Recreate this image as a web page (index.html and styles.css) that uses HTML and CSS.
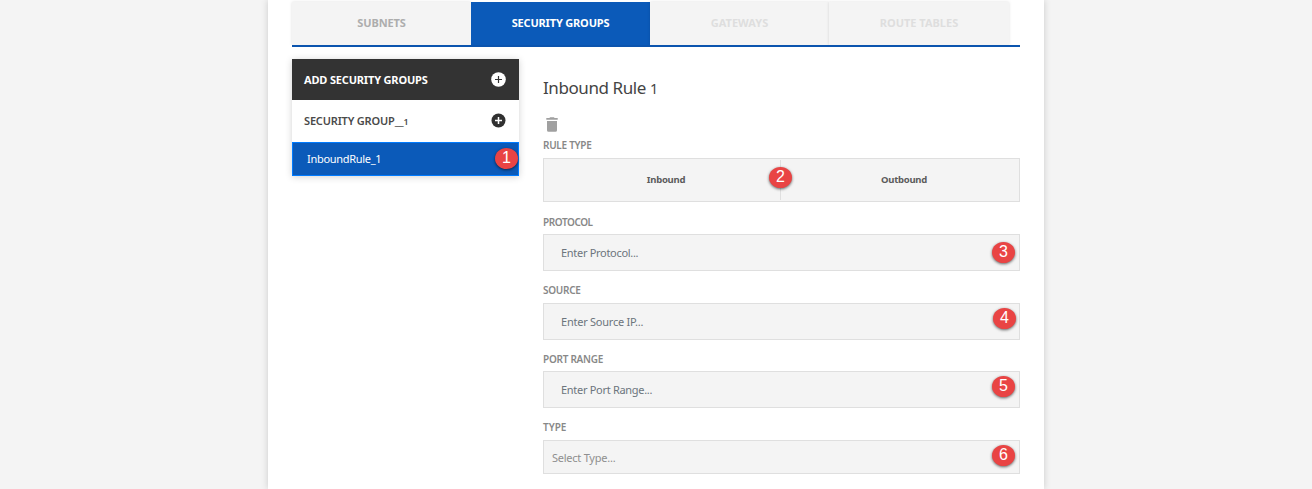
FILE: index.html
```html
<!DOCTYPE html>
<html lang="en">
<head>
<meta charset="utf-8">
<title>Security Groups</title>
<link rel="stylesheet" href="styles.css">
</head>
<body>
<main class="card">
  <nav class="tabs">
    <a class="tab"><span class="t-sub">SUBNETS</span></a>
    <a class="tab active"><span class="t-sec">SECURITY GROUPS</span></a>
    <a class="tab disabled"><span class="t-gate">GATEWAYS</span></a>
    <a class="tab disabled divided"><span class="t-route">ROUTE TABLES</span></a>
  </nav>
  <div class="columns">
    <aside class="groups">
      <div class="group-head"><span class="t-add">ADD SECURITY GROUPS</span>
        <svg width="15" height="15" viewBox="0 0 15 15"><circle cx="7.5" cy="7.5" r="7.3" fill="#fff"/><path d="M7.5 4v7M4 7.5h7" stroke="#333" stroke-width="1.2"/></svg>
      </div>
      <div class="group-name"><span class="t-group">SECURITY GROUP__<small>1</small></span>
        <svg width="15" height="15" viewBox="0 0 15 15"><circle cx="7.5" cy="7.5" r="7" fill="#303030"/><path d="M7.5 4v7M4 7.5h7" stroke="#fff" stroke-width="1.5"/></svg>
      </div>
      <div class="rule"><span class="t-rule">InboundRule_1</span><b class="badge b1">1</b></div>
    </aside>
    <section class="form">
      <h1><span class="t-title">Inbound Rule <small>1</small></span></h1>
      <svg class="trash" width="12" height="15" viewBox="0 0 12 15"><path d="M0.3 1.1h3L4.2 0.2h3.6l.9.9h3v1.6H.3zM1 4h10v9.2q0 1.6-1.6 1.6H2.6Q1 14.8 1 13.2z" fill="#a0a0a0"/></svg>
      <label class="l1"><span class="t-rt">RULE TYPE</span></label>
      <div class="toggle"><div><span class="t-in">Inbound</span></div><div><span class="t-out">Outbound</span></div><b class="badge b2">2</b></div>
      <label class="l2"><span class="t-prot">PROTOCOL</span></label>
      <div class="field"><span class="t-ep">Enter Protocol...</span><b class="badge b3">3</b></div>
      <label class="l3"><span class="t-src">SOURCE</span></label>
      <div class="field"><span class="t-es">Enter Source IP...</span><b class="badge b4">4</b></div>
      <label class="l4"><span class="t-port">PORT RANGE</span></label>
      <div class="field"><span class="t-er">Enter Port Range...</span><b class="badge b5">5</b></div>
      <label class="l3"><span class="t-type">TYPE</span></label>
      <div class="field select"><span class="t-st">Select Type...</span><b class="badge b6">6</b></div>
    </section>
  </div>
</main>
</body>
</html>
```
FILE: styles.css
```css
* { box-sizing: border-box; }
body { margin: 0; height: 489px; overflow: hidden; background: #f4f4f4; font-family: "Noto Sans", "Open Sans", sans-serif; }
span { white-space: nowrap; }
.card { width: 776px; height: 489px; margin-left: 268px; padding: 2px 24px 0; background: #fff; box-shadow: 0 0 7px rgba(0,0,0,.17); }
.tabs { display: flex; height: 45px; border-bottom: 2px solid #0b54ae; font-size: 11px; font-weight: 700; color: #adadad; }
.tab { width: 179px; display: flex; align-items: center; justify-content: center; padding-bottom: 2px; background: #f4f4f4; box-shadow: 0 0 3px rgba(0,0,0,.13); clip-path: inset(-3px -3px 0 -3px); }
.tab.active { background: #0b5ab9; color: #fff; box-shadow: none; }
.tab.disabled { color: #dedede; }
.tab.divided { width: 180px; }
.columns { display: flex; gap: 24px; padding-top: 12px; }
.groups { width: 227px; height: 117px; box-shadow: 0 1px 7px rgba(0,0,0,.18); font-size: 11px; }
.group-head, .group-name { display: flex; align-items: center; justify-content: space-between; padding: 0 13px 0 12px; }
.group-head { height: 41px; background: #333; color: #fff; font-weight: 700; }
.group-name { height: 42px; padding-bottom: 2px; color: #4a4a4a; font-weight: 600; }
small { font-size: .8em; }
.rule { position: relative; height: 34px; display: flex; align-items: center; padding: 0 0 2px 14px; background: #0b5ab9; border: 1px solid #007bff; color: #fff; font-size: 11px; }
.form { width: 477px; }
h1 { margin: 0; height: 58px; padding-top: 17px; font-size: 17px; line-height: 24px; font-weight: 400; color: #444; }
.trash { display: block; margin-left: 3px; }
label { display: flex; align-items: center; font-size: 10px; font-weight: 600; color: #888; line-height: 14px; }
.l1 { height: 26px; }
.l2 { height: 32px; padding-top: 8px; }
.l3 { height: 32px; padding-top: 6px; }
.l4 { height: 31px; padding-top: 7px; }
.toggle { position: relative; height: 44px; display: flex; background: #f4f4f4; border: 1px solid #dfdfdf; font-size: 9.5px; font-weight: 700; color: #5b5b5b; }
.toggle div { flex: 1; display: flex; align-items: center; justify-content: center; padding: 0 0 1px 8px; }
.toggle div + div { flex: 0 0 239px; border-left: 1px solid #dfdfdf; margin: 1px 0; }
.field { position: relative; height: 37px; display: flex; align-items: center; padding-left: 17px; background: #f4f4f4; border: 1px solid #dfdfdf; color: #6c757d; font-size: 11px; }
.field.select { height: 34px; padding-left: 8px; color: #8f8f8f; }
.t-sub { letter-spacing: -.12px; }
.t-sec, .t-add, .t-group { letter-spacing: -.17px; }
.t-rule { letter-spacing: -.3px; }
.t-title { letter-spacing: -.42px; }
.t-title small { font-size: .85em; }
.t-rt, .t-port, .t-src { letter-spacing: -.27px; }
.t-prot { letter-spacing: -.42px; }
.t-in, .t-out { letter-spacing: -.27px; }
.t-ep, .t-er { letter-spacing: -.3px; }
.t-es, .t-st { letter-spacing: -.24px; }
.badge { position: absolute; width: 23px; height: 21px; border-radius: 50%; background: #e94444; box-shadow: 0 1px 3px rgba(0,0,0,.6); color: #fff; font: 400 16px/19px "Liberation Sans", sans-serif; text-align: center; }
.b1 { right: 0; top: 5px; }
.b2 { left: 225px; top: 8px; }
.b3 { right: 4px; top: 7px; }
.b4 { right: 3px; top: 4px; }
.b5 { right: 4px; top: 4px; }
.b6 { right: 4px; top: 4px; }
```
